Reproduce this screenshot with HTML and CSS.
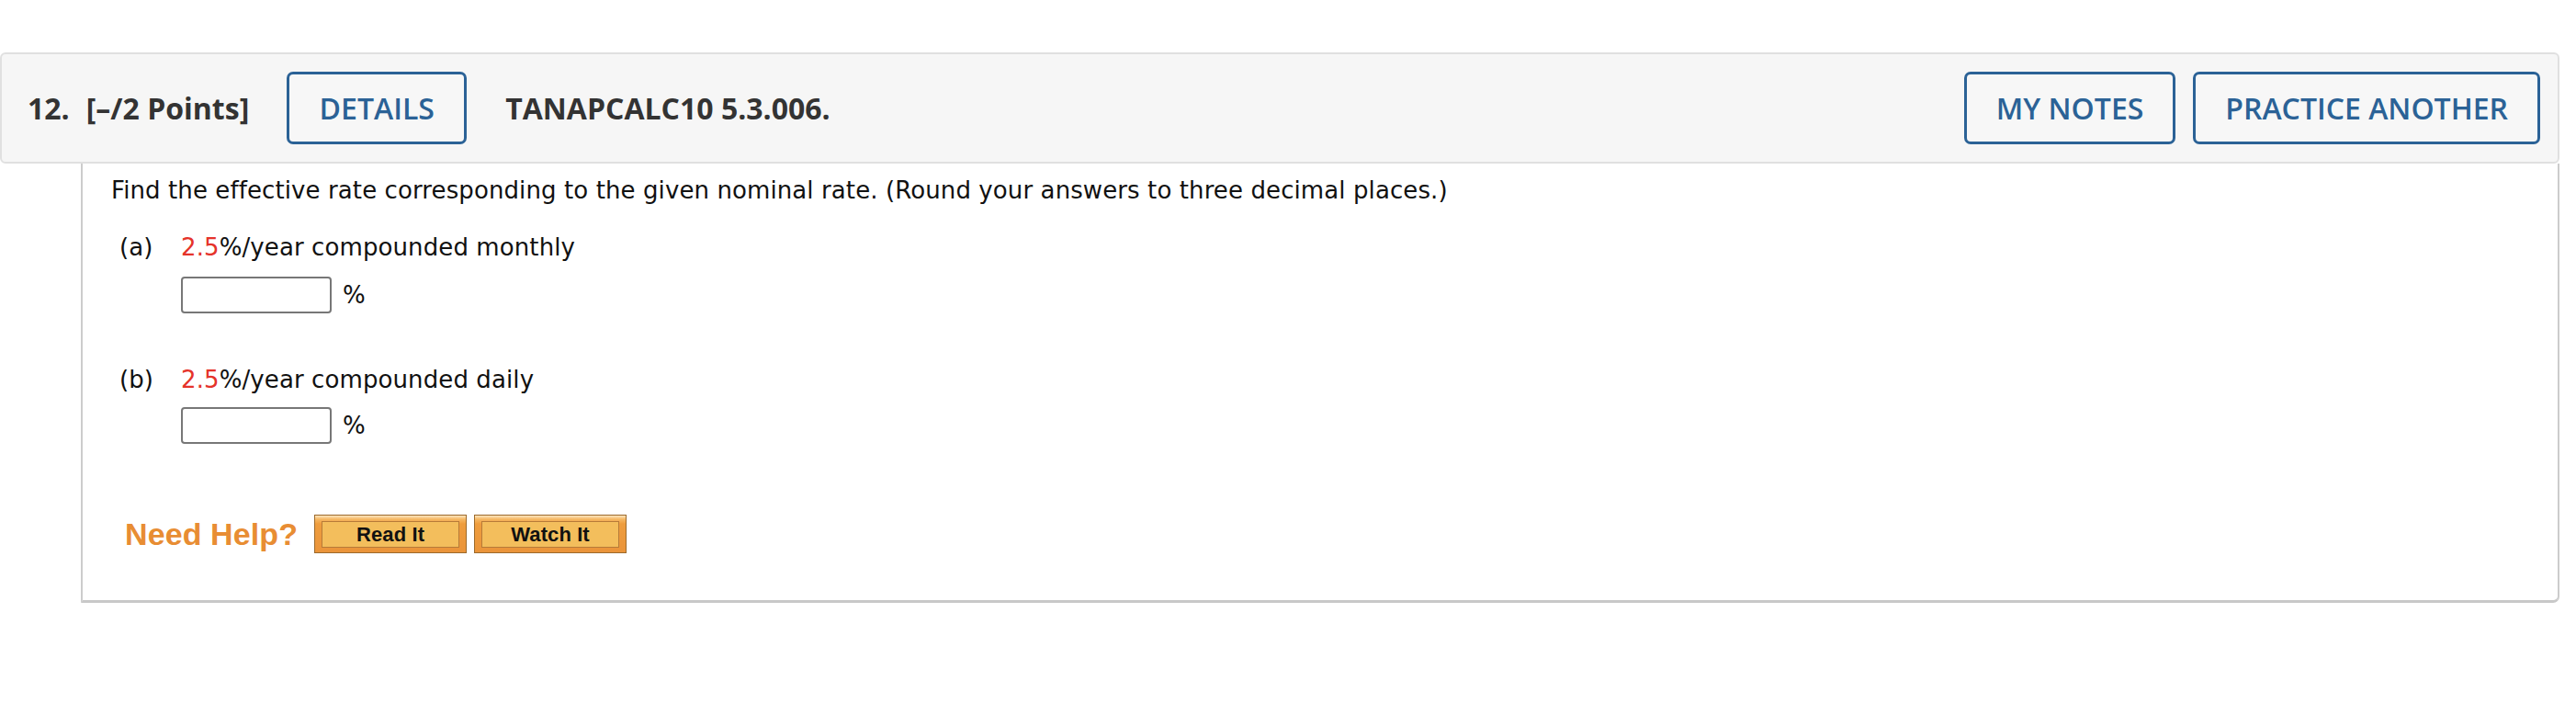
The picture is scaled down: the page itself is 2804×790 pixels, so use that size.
FILE: index.html
```html
<!DOCTYPE html>
<html>
<head>
<meta charset="utf-8">
<link rel="stylesheet" href="styles.css">
</head>
<body>
<div class="page">
  <div class="qhead">
    <span class="num">12.</span>
    <span class="pts">[–/2 Points]</span>
    <button class="btn btn-details">DETAILS</button>
    <span class="code">TANAPCALC10 5.3.006.</span>
    <div class="actions">
      <button class="btn">MY NOTES</button>
      <button class="btn">PRACTICE ANOTHER</button>
    </div>
  </div>
  <div class="qbody">
    <p class="intro">Find the effective rate corresponding to the given nominal rate. (Round your answers to three decimal places.)</p>
    <div class="part part-a">
      <div class="row"><span class="lbl">(a)</span><span><span class="red">2.5</span>%/year compounded monthly</span></div>
      <div class="answer"><span class="field"></span><span class="unit">%</span></div>
    </div>
    <div class="part part-b">
      <div class="row"><span class="lbl">(b)</span><span><span class="red">2.5</span>%/year compounded daily</span></div>
      <div class="answer"><span class="field"></span><span class="unit">%</span></div>
    </div>
    <div class="help">
      <span class="need">Need Help?</span>
      <span class="hbtn"><span>Read It</span></span>
      <span class="hbtn"><span>Watch It</span></span>
    </div>
  </div>
</div>
</body>
</html>
```
FILE: styles.css
```css
html, body {
  margin: 0;
  padding: 0;
  background: #fff;
}
.page {
  padding-top: 57px;
  width: 2786px;
}
.qhead {
  box-sizing: border-box;
  height: 121px;
  border: 2px solid #e0e0e0;
  border-radius: 6px;
  background: #f6f6f6;
  display: flex;
  align-items: center;
  padding: 0 19px 0 28px;
  font-family: "Open Sans", sans-serif;
  color: #333;
}
.num {
  font-weight: 700;
  font-size: 32px;
}
.pts {
  font-weight: 700;
  font-size: 32px;
  margin-left: 18px;
}
.code {
  font-weight: 700;
  font-size: 32px;
  margin-left: 42px;
}
.btn {
  box-sizing: border-box;
  height: 79px;
  border: 3px solid #2b6296;
  border-radius: 7px;
  background: #f7f7f7;
  color: #2b6296;
  font-family: "Open Sans", sans-serif;
  font-weight: 600;
  font-size: 32px;
  padding: 0 32px;
}
.btn-details {
  margin-left: 41px;
  width: 196px;
  padding: 0;
}
.actions {
  margin-left: auto;
  display: flex;
  gap: 19px;
}
.qbody {
  margin-left: 88px;
  height: 478px;
  box-sizing: border-box;
  border: 2px solid #cccccc;
  border-top: none;
  border-bottom: 3px solid #c8c8c8;
  border-bottom-right-radius: 7px;
  padding: 13px 0 0 31px;
  font-family: "DejaVu Sans", Verdana, sans-serif;
  font-size: 26px;
  line-height: 32px;
  letter-spacing: 0.1px;
  color: #111;
}
.intro {
  margin: 0;
}
.part {
  padding-left: 9px;
}
.part-a {
  margin-top: 30px;
}
.part-b {
  margin-top: 56px;
}
.row {
  display: flex;
}
.lbl {
  width: 67px;
}
.red {
  color: #e5332a;
}
.answer {
  display: flex;
  align-items: center;
  margin-top: 16px;
  padding-left: 67px;
}
.part-b .answer {
  margin-top: 14px;
}
.field {
  box-sizing: border-box;
  width: 164px;
  height: 40px;
  border: 2px solid #777;
  border-radius: 4px;
  background: #fff;
}
.unit {
  margin-left: 12px;
}
.help {
  display: flex;
  align-items: center;
  margin-top: 77px;
  padding-left: 15px;
}
.need {
  font-family: "Liberation Sans", Arial, sans-serif;
  font-weight: 700;
  font-size: 34px;
  color: #e88d33;
  margin-right: 18px;
}
.hbtn {
  box-sizing: border-box;
  width: 166px;
  height: 42px;
  border: 1px solid #9c6a2c;
  background: linear-gradient(#fde6c0 0, #f6b863 4px, #ee9d3e 9px, #ea943a 100%);
  padding: 6px 7px 5px 7px;
  margin-right: 8px;
  display: flex;
}
.hbtn span {
  flex: 1;
  border: 1px solid #b77b38;
  background: #f3be5c;
  font-family: "Liberation Sans", Arial, sans-serif;
  font-weight: 700;
  font-size: 22px;
  color: #111;
  display: flex;
  align-items: center;
  justify-content: center;
}
```
